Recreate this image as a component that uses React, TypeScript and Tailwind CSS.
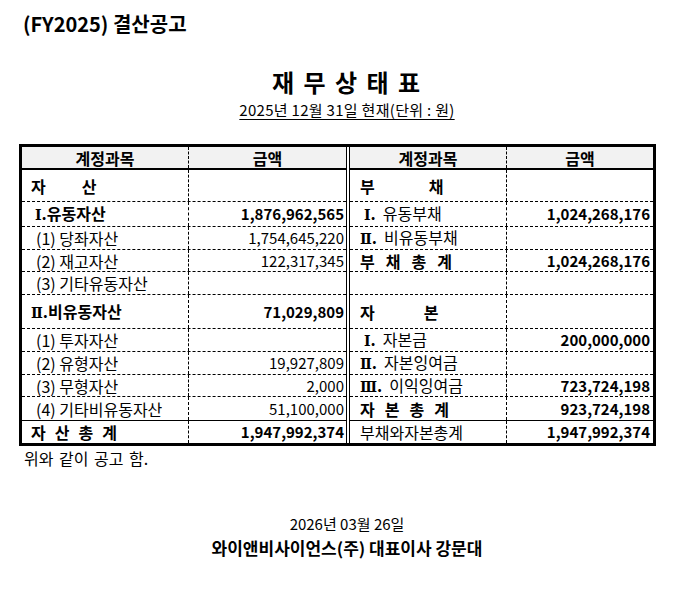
import React from "react";

type Row = {
  label: React.ReactNode;
  value?: string;
  vb?: boolean;
};

const H = [32, 25, 23, 22, 23, 34, 23, 23, 22, 24];

function Spaced({ chars, gap }: { chars: string[]; gap: string }) {
  return (
    <span className={`flex font-bold ${gap}`}>
      {chars.map((c, i) => (
        <span key={i}>{c}</span>
      ))}
    </span>
  );
}

function R({ n }: { n: string }) {
  return <span className="font-['DejaVu_Serif',serif] text-[14px] font-bold">{n}</span>;
}

function RLabel({ n, text, indent }: { n: string; text: string; indent?: boolean }) {
  return (
    <span className={indent ? "pl-[4px]" : ""}>
      <R n={n} />
      <span className="font-bold">.</span>
      <span className="pl-[7px]">{text}</span>
    </span>
  );
}

const leftRows: Row[] = [
  { label: <Spaced chars={["자", "산"]} gap="gap-[36px]" /> },
  {
    label: (
      <span className="pl-[4px] font-bold">
        <R n="Ⅰ" />.유동자산
      </span>
    ),
    value: "1,876,962,565",
    vb: true,
  },
  { label: <span className="pl-[5px]">(1) 당좌자산</span>, value: "1,754,645,220" },
  { label: <span className="pl-[5px]">(2) 재고자산</span>, value: "122,317,345" },
  { label: <span className="pl-[5px]">(3) 기타유동자산</span> },
  {
    label: (
      <span className="font-bold">
        <R n="Ⅱ" />.비유동자산
      </span>
    ),
    value: "71,029,809",
    vb: true,
  },
  { label: <span className="pl-[5px]">(1) 투자자산</span> },
  { label: <span className="pl-[5px]">(2) 유형자산</span>, value: "19,927,809" },
  { label: <span className="pl-[5px]">(3) 무형자산</span>, value: "2,000" },
  { label: <span className="pl-[5px]">(4) 기타비유동자산</span>, value: "51,100,000" },
];

const rightRows: Row[] = [
  { label: <Spaced chars={["부", "채"]} gap="gap-[54px]" /> },
  { label: <RLabel n="Ⅰ" text="유동부채" indent />, value: "1,024,268,176", vb: true },
  { label: <RLabel n="Ⅱ" text="비유동부채" /> },
  { label: <Spaced chars={["부", "채", "총", "계"]} gap="gap-[11px]" />, value: "1,024,268,176", vb: true },
  { label: "" },
  { label: <Spaced chars={["자", "본"]} gap="gap-[49px]" /> },
  { label: <RLabel n="Ⅰ" text="자본금" indent />, value: "200,000,000", vb: true },
  { label: <RLabel n="Ⅱ" text="자본잉여금" /> },
  { label: <RLabel n="Ⅲ" text="이익잉여금" />, value: "723,724,198", vb: true },
  { label: <Spaced chars={["자", "본", "총", "계"]} gap="gap-[10px]" />, value: "923,724,198", vb: true },
];

function Half({
  rows,
  total,
  side,
}: {
  rows: Row[];
  total: Row;
  side: "left" | "right";
}) {
  const isLeft = side === "left";
  const c1 = isLeft ? "w-[167px] pl-[9px]" : "w-[157px] pl-[10px]";
  const c2 = isLeft ? "pr-[2px]" : "pr-[3px]";
  return (
    <div
      className={`flex flex-col ${
        isLeft ? "w-[325px] border-r border-black" : "w-[304px] border-l border-black"
      }`}
    >
      <div className="flex h-[23px] border-b-2 border-black bg-[#f2f2f2] font-bold">
        <div
          className={`flex items-center justify-center border-r border-dashed border-black ${
            isLeft ? "w-[167px]" : "w-[157px]"
          }`}
        >
          계정과목
        </div>
        <div className="flex flex-1 items-center justify-center">금액</div>
      </div>
      {rows.map((r, i) => (
        <div
          key={i}
          style={{ height: H[i] }}
          className={`flex border-b border-black ${i === rows.length - 1 ? "border-solid" : "border-dashed"}`}
        >
          <div className={`flex items-center whitespace-pre border-r border-dashed border-black ${c1}`}>
            {r.label}
          </div>
          <div
            className={`flex flex-1 items-center justify-end text-[15px] ${c2} ${r.vb ? "font-bold" : ""}`}
          >
            {r.value}
          </div>
        </div>
      ))}
      <div className="flex h-[22px]">
        <div className={`flex items-center whitespace-pre border-r border-dashed border-black ${c1}`}>
          {total.label}
        </div>
        <div
          className={`flex flex-1 items-center justify-end text-[15px] ${c2} ${total.vb ? "font-bold" : ""}`}
        >
          {total.value}
        </div>
      </div>
    </div>
  );
}

export default function App() {
  return (
    <div className="min-h-[591px] w-[678px] bg-white font-['Noto_Sans_CJK_KR',sans-serif] text-black">
      <div className="pl-[23px] pt-[10px] text-[20px] font-bold leading-[28px]">(FY2025) 결산공고</div>

      <div className="mt-[28px] pl-[16px] text-center text-[24px] font-bold leading-[32px] tracking-[2px]">
        재 무 상 태 표
      </div>
      <div className="mt-[2px] pl-[16px] text-center text-[15px] leading-[20px] tracking-[0.3px]">
        <span className="underline underline-offset-[3px]">2025년 12월 31일 현재(단위 : 원)</span>
      </div>

      <div className="ml-[19px] mt-[24px] flex w-[637px] border-[3px] border-black text-[16px] leading-[20px]">
        <Half
          side="left"
          rows={leftRows}
          total={{
            label: <Spaced chars={["자", "산", "총", "계"]} gap="gap-[9px]" />,
            value: "1,947,992,374",
            vb: true,
          }}
        />
        <div className="w-[2px]" />
        <Half
          side="right"
          rows={rightRows}
          total={{ label: "부채와자본총계", value: "1,947,992,374", vb: true }}
        />
      </div>

      <div className="mt-[2px] pl-[24px] text-[16px] leading-[20px] [word-spacing:2px]">위와 같이 공고 함.</div>

      <div className="mt-[46px] pl-[16px] text-center text-[15px] leading-[20px]">2026년 03월 26일</div>
      <div className="mt-[3px] pl-[16px] text-center text-[17px] font-bold leading-[22px]">
        와이앤비사이언스(주) 대표이사 강문대
      </div>
    </div>
  );
}
